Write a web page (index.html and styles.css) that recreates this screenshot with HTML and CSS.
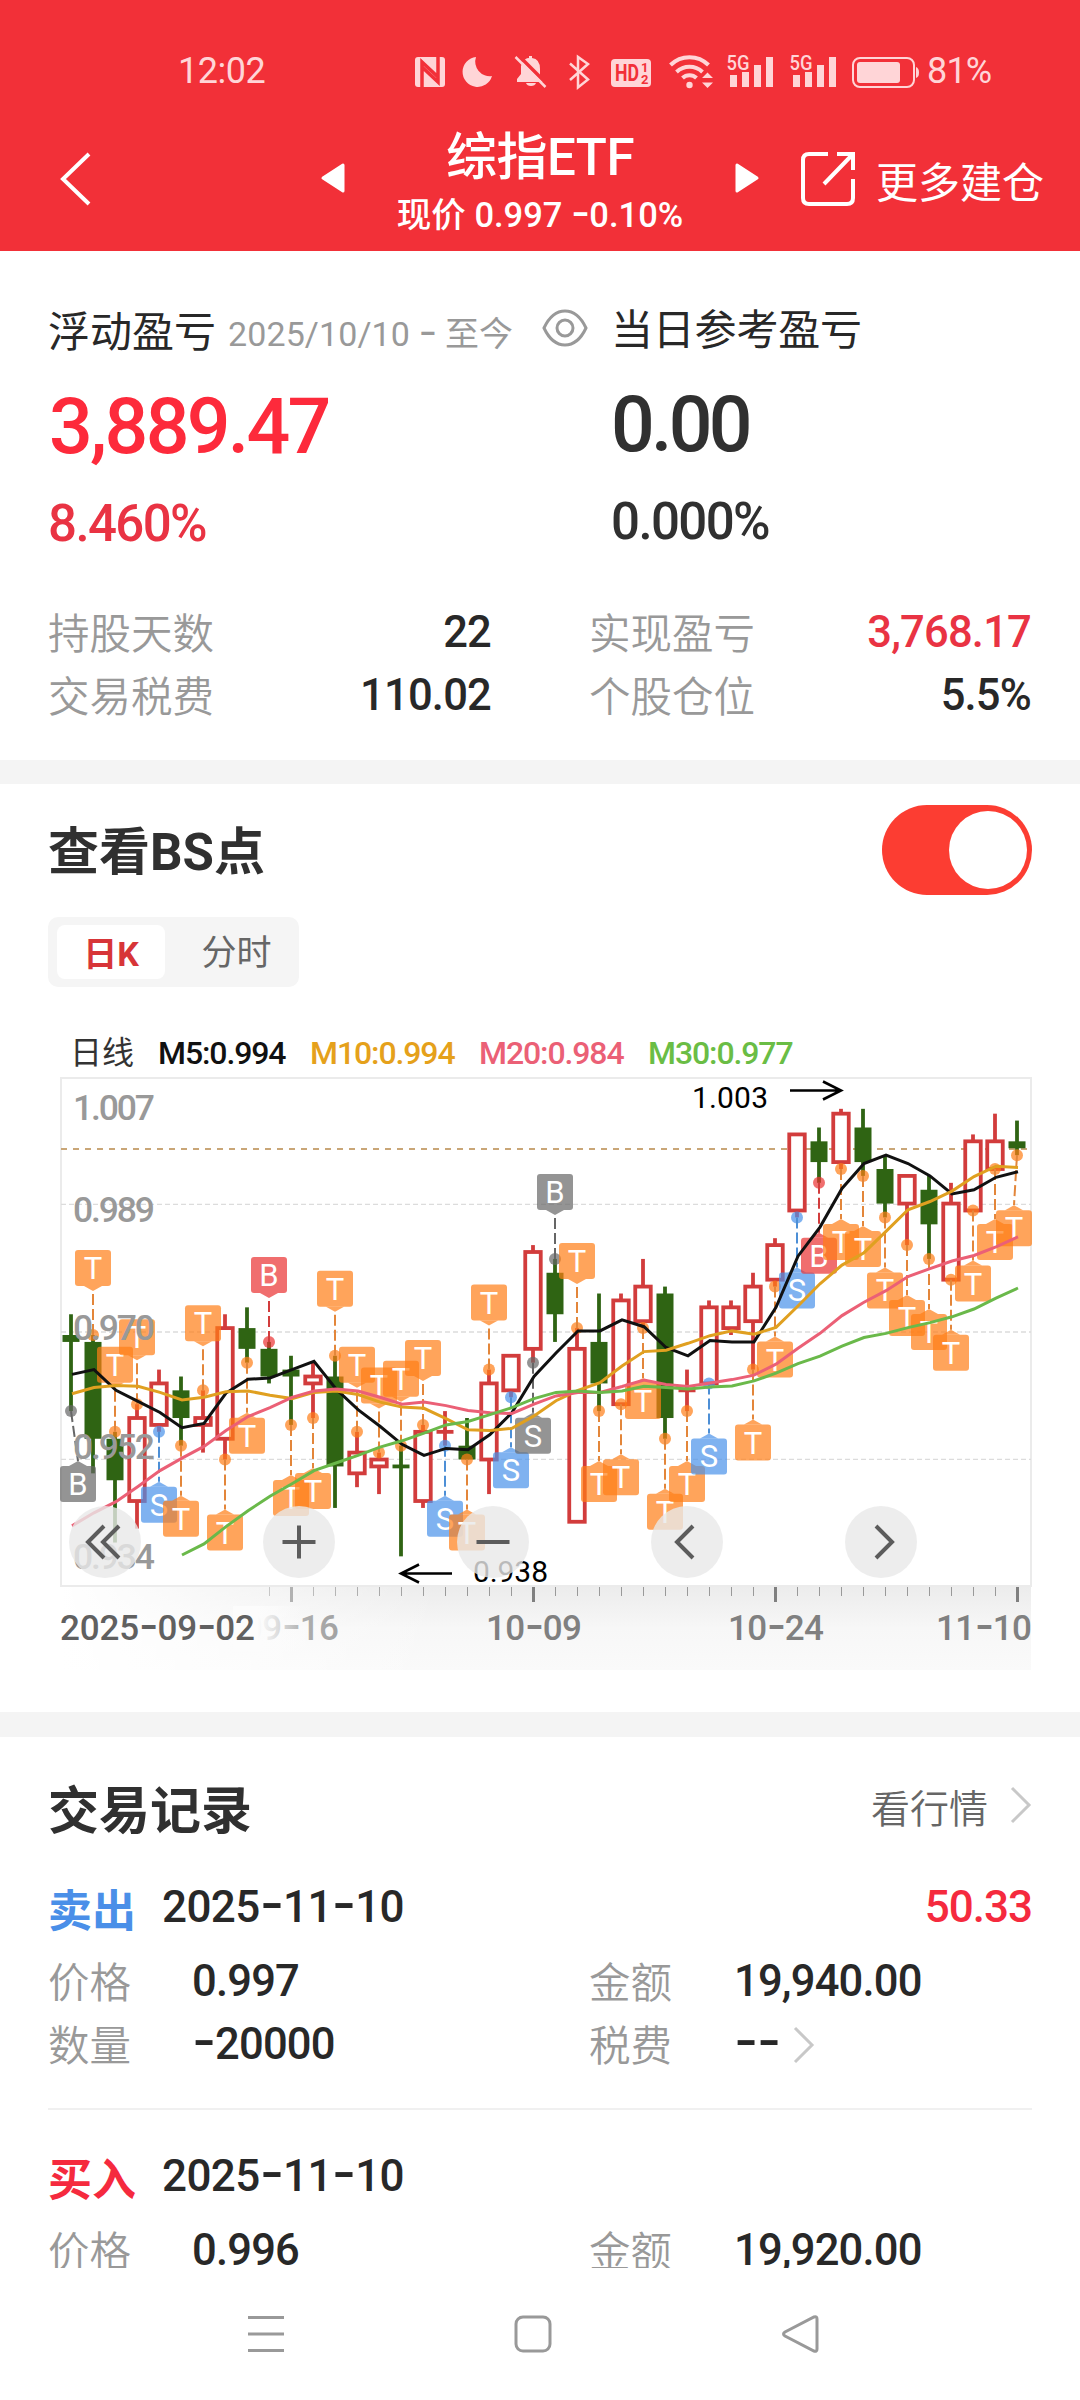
FILE: index.html
```html
<!DOCTYPE html>
<html lang="zh-CN">

<head>
    <meta charset="UTF-8">
    <title>综指ETF</title>
    <link rel="stylesheet" href="styles.css">
</head>

<body>

    <header class="header">
        <div class="status">
            <span class="time">12:02</span>
            <svg class="status-icons" viewBox="410 48 510 44" width="510" height="44">
                <!-- nfc -->
                <rect x="415" y="56" width="30" height="30" rx="3" />
                <path class="cut" d="M422 86V61l16 15M438 56v25l-16-15" />
                <!-- moon -->
                <path d="M476 56a15 15 0 1 0 16 19a14.500 14.500 0 0 1-16-19z" />
                <!-- bell off -->
                <path d="M522 62q3-5 7-5v-2h3v2q8 1 8 11v7l5 6h-28v-3l4-5v-8z" />
                <path d="M526 82h10q-1 3-5 3t-5-3z" />
                <path class="cut" d="M518 54l30 30" stroke-width="2" />
                <path class="line" d="M515.500 56l30 30" />
                <!-- bluetooth -->
                <path class="line" d="M570 62.500l18 16-10 8V56l10 7-18 16" />
                <!-- hd -->
                <rect x="611" y="58" width="40" height="28" rx="4" />
                <text class="hd" x="615" y="80" textLength="24" lengthAdjust="spacingAndGlyphs">HD</text>
                <text class="hd-num" x="641" y="71">1</text>
                <text class="hd-num" x="641" y="83">2</text>
                <!-- wifi -->
                <circle cx="689.500" cy="84" r="3.200" />
                <path class="wifi" d="M670.500 64a27 27 0 0 1 38 0M676.500 71a19 19 0 0 1 26 0M682.500 77a10 10 0 0 1 14 0" />
                <path d="M702 77l5.500-5.500 5.500 5.500zM702 81.500h11l-5.500 5.500z" />
                <!-- signal x2 -->
                <text class="net" x="726.500" y="68.500" textLength="23" lengthAdjust="spacingAndGlyphs">5G</text>
                <path d="M730 74h7v12h-7zM742 71h7v15h-7zM754 64h7v22h-7zM766 56h7v30h-7z" />
                <text class="net" x="789.500" y="68.500" textLength="23" lengthAdjust="spacingAndGlyphs">5G</text>
                <path d="M793 74h7v12h-7zM805 71h7v15h-7zM817 64h7v22h-7zM829 56h7v30h-7z" />
                <!-- battery -->
                <rect class="outline" x="853" y="57" width="61" height="29" rx="7" />
                <rect x="857" y="61" width="43" height="21" rx="3" />
                <path d="M916 66q3 1 3 5.500t-3 5.500z" />
            </svg>
            <span class="battery">81%</span>
        </div>

        <div class="nav">
            <svg class="back" width="32" height="56" viewBox="0 0 32 56"><path d="M30 3L4 28l26 25" /></svg>
            <svg class="prev" width="26" height="32" viewBox="0 0 26 32"><path d="M23 3v26L3 16z" /></svg>
            <div class="nav-title">
                <div class="name">综指ETF</div>
                <div class="price">现价 0.997 <span class="dash">-</span>0.10%</div>
            </div>
            <svg class="next" width="26" height="32" viewBox="0 0 26 32"><path d="M3 3v26l20-13z" /></svg>
            <svg class="open" width="56" height="56" viewBox="0 0 56 56"><path d="M28 3H9q-6 0-6 6v38q0 6 6 6h38q6 0 6-6V28M37 3h16v16M53 3L24 33" /></svg>
            <span class="more">更多建仓</span>
        </div>
    </header>

    <section class="summary">
        <div class="pnl">
            <div class="pnl-col red">
                <div class="pnl-head">
                    <span>浮动盈亏</span>
                    <span class="range">2025/10/10 <span class="dash">-</span> 至今</span>
                    <svg class="eye" width="46" height="40" viewBox="0 0 46 40">
                        <path d="M2 20Q10 3 23 3t21 17Q36 37 23 37T2 20z" />
                        <circle cx="23" cy="20" r="8" />
                    </svg>
                </div>
                <div class="pnl-value">3,889.47</div>
                <div class="pnl-rate">8.460%</div>
            </div>
            <div class="pnl-col right">
                <div class="pnl-head">当日参考盈亏</div>
                <div class="pnl-value">0.00</div>
                <div class="pnl-rate">0.000%</div>
            </div>
        </div>
        <div class="stats">
            <div class="stat"><span class="label">持股天数</span><span class="value">22</span></div>
            <div class="stat"><span class="label">实现盈亏</span><span class="value red">3,768.17</span></div>
            <div class="stat"><span class="label">交易税费</span><span class="value">110.02</span></div>
            <div class="stat"><span class="label">个股仓位</span><span class="value">5.5%</span></div>
        </div>
    </section>

    <section class="bs">
        <div class="bs-head">
            <h2>查看BS点</h2>
            <div class="switch"></div>
        </div>
        <div class="tabs">
            <span class="tab active">日K</span>
            <span class="tab">分时</span>
        </div>
        <div class="legend">
            <span class="day">日线</span>
            <span class="m5">M5:0.994</span>
            <span class="m10">M10:0.994</span>
            <span class="m20">M20:0.984</span>
            <span class="m30">M30:0.977</span>
        </div>
        <div class="chart">
            <svg id="kline" width="984" height="594" viewBox="0 0 984 594"></svg>
            <div class="tools">
                <svg width="72" height="72" viewBox="0 0 72 72"><path d="M35 20L19 36l16 16M50 20L34 36l16 16" /></svg>
                <svg width="72" height="72" viewBox="0 0 72 72"><path d="M19.500 36h33M36 19.500v33" /></svg>
                <svg width="72" height="72" viewBox="0 0 72 72"><path d="M19.500 36h33" /></svg>
                <svg width="72" height="72" viewBox="0 0 72 72"><path d="M42 20L26 36l16 16" /></svg>
                <svg width="72" height="72" viewBox="0 0 72 72"><path d="M31 20l16 16-16 16" /></svg>
            </div>
        </div>
    </section>

    <section class="records">
        <div class="records-head">
            <h2>交易记录</h2>
            <span class="quote">看行情</span>
            <svg class="chevron" width="24" height="40" viewBox="0 0 24 40"><path d="M3 3l17 17L3 37" /></svg>
        </div>

        <div class="record">
            <div class="record-head">
                <span class="side sell">卖出</span>
                <span class="date">2025<span class="dash">-</span>11<span class="dash">-</span>10</span>
                <span class="profit">50.33</span>
            </div>
            <div class="fields">
                <span class="label">价格</span><span class="value">0.997</span>
                <span class="label">金额</span><span class="value">19,940.00</span>
                <span class="label">数量</span><span class="value"><span class="dash">-</span>20000</span>
                <span class="label">税费</span>
                <span class="value fee"><span><span class="dash">--</span></span><svg class="chevron" width="24" height="40" viewBox="0 0 24 40"><path d="M3 3l17 17L3 37" /></svg></span>
            </div>
        </div>

        <div class="record">
            <div class="record-head">
                <span class="side buy">买入</span>
                <span class="date">2025<span class="dash">-</span>11<span class="dash">-</span>10</span>
            </div>
            <div class="fields">
                <span class="label">价格</span><span class="value">0.996</span>
                <span class="label">金额</span><span class="value">19,920.00</span>
            </div>
        </div>
    </section>

    <footer class="navbar">
        <svg width="40" height="40" viewBox="0 0 40 40"><path d="M2 3.500h36M2 20h36M2 36.500h36" /></svg>
        <svg width="40" height="40" viewBox="0 0 40 40"><rect x="3" y="3" width="34" height="34" rx="7" /></svg>
        <svg width="40" height="40" viewBox="0 0 40 40"><path d="M37 5v30q0 3-3 2L5 22q-3-2 0-4L34 3q3-1 3 2z" /></svg>
    </footer>

    <script src="chart.js"></script>

</body>

</html>
```

FILE: styles.css
```css
* {
    box-sizing: border-box;
}

body {
    margin: 0;
    width: 1080px;
    height: 2400px;
    overflow: hidden;
    display: flex;
    flex-direction: column;
    background: #fff;
    color: #282828;
    font-family: Roboto, "Noto Sans CJK SC", sans-serif;
}

svg {
    display: block;
    flex: none;
}

h2 {
    margin: 0;
    padding-top: 5px;
    font-size: 51px;
    line-height: 60px;
    font-weight: bold;
    color: #303030;
}

/* wide dash next to the digits */
.dash {
    font-family: Inter, sans-serif;
    font-size: 1.2em;
    line-height: 0;
    letter-spacing: -0.02em;
}

.red {
    color: #e93343;
}

/* header */
.header {
    height: 251px;
    flex: none;
    background: #f23038;
    color: #fff;
}

.status {
    height: 98px;
    padding: 44px 0 0 178px;
    display: flex;
    align-items: center;
    color: #ffd5d7;
    font-size: 36px;
}

.time {
    width: 232px;
    letter-spacing: -0.5px;
}

.battery {
    margin-left: 7px;
    letter-spacing: -0.8px;
}

.status-icons {
    fill: #ffd5d7;
    overflow: visible;
}

.status-icons .cut {
    fill: none;
    stroke: #f23038;
    stroke-width: 3.5;
}

.status-icons .line,
.status-icons .outline {
    fill: none;
    stroke: #ffd5d7;
    stroke-width: 2.5;
}

.status-icons .outline {
    stroke-width: 2;
}

.status-icons .wifi {
    fill: none;
    stroke: #ffd5d7;
    stroke-width: 4;
}

.status-icons .hd {
    fill: #f23038;
    font-size: 23px;
    font-weight: bold;
}

.status-icons .hd-num {
    fill: #f23038;
    font-size: 13px;
    font-weight: bold;
}

.status-icons .net {
    font-size: 20px;
    font-weight: 500;
}

.nav {
    height: 153px;
    display: flex;
    align-items: center;
    padding: 9px 0 0 59px;
}

.nav svg {
    fill: #fff;
}

.nav .back,
.nav .open {
    fill: none;
    stroke: #fff;
    stroke-width: 4;
}

.nav .prev {
    margin-left: 229px;
}

.nav .prev,
.nav .next {
    stroke: #fff;
    stroke-width: 3;
    stroke-linejoin: round;
    margin-top: -3px;
}

.nav-title {
    width: 388px;
    text-align: center;
    margin-top: 11px;
}

.name {
    font-size: 51px;
    line-height: 61px;
    font-weight: 500;
    letter-spacing: -0.5px;
}

.price {
    font-size: 34.500px;
    line-height: 54px;
    font-weight: 500;
}

.nav .open {
    margin-left: 40px;
}

.more {
    margin: 0 0 0 20px;
    font-size: 42px;
}

/* profit summary */
.summary {
    height: 509px;
    flex: none;
    padding: 47px 48px 0;
}

.pnl {
    display: grid;
    grid-template-columns: 563px 1fr;
}

.pnl-head {
    height: 60px;
    display: flex;
    align-items: center;
    font-size: 42px;
    color: #282828;
    white-space: nowrap;
}

.pnl-col.right {
    margin-top: -2px;
    color: #303030;
}

.pnl-col.right .pnl-head {
    letter-spacing: -0.2px;
}

.range {
    margin-left: 12px;
    padding-top: 7px;
    font-size: 34px;
    color: #999;
    letter-spacing: 0.1px;
}

.eye {
    margin: 0 0 0 auto;
    margin-right: 23px;
    fill: none;
    stroke: #999;
    stroke-width: 3;
}

.pnl-value {
    margin-top: 20px;
    font-size: 77px;
    line-height: 98px;
    font-weight: 500;
    letter-spacing: -2.700px;
}

.pnl-col.red .pnl-value {
    padding-left: 1px;
    color: #fd2a3b;
}

.pnl-col.right .pnl-value {
    letter-spacing: -3.700px;
}

.pnl-rate {
    margin-top: 20px;
    font-size: 51px;
    line-height: 56px;
    font-weight: 500;
    letter-spacing: -1.600px;
}

.stats {
    margin-top: 49px;
    display: grid;
    grid-template-columns: 443px 442px;
    column-gap: 98px;
    grid-auto-rows: 63px;
}

.stat {
    display: flex;
    justify-content: space-between;
    align-items: center;
}

.label {
    font-size: 41.500px;
    line-height: 56px;
    font-weight: 350;
    color: #999;
    padding-top: 5px;
}

.value {
    font-size: 43.500px;
    line-height: 56px;
    font-weight: 500;
    letter-spacing: -0.8px;
}

/* chart block */
.bs {
    height: 952px;
    flex: none;
    border-top: 24px solid #f4f4f4;
    padding: 0 48px;
}

.bs-head {
    height: 133px;
    display: flex;
    justify-content: space-between;
    align-items: center;
}

.switch {
    width: 150px;
    height: 90px;
    margin-top: -1px;
    padding: 6px 5px;
    border-radius: 45px;
    background: #fc3d32;
}

.switch::after {
    content: "";
    display: block;
    width: 78px;
    height: 78px;
    margin-left: auto;
    border-radius: 50%;
    background: #fff;
}

.tabs {
    width: 251px;
    height: 70px;
    padding: 8px 0 8px 9px;
    display: flex;
    border-radius: 10px;
    background: #f5f5f5;
}

.tab {
    flex: none;
    width: 108px;
    height: 54px;
    line-height: 58px;
    border-radius: 8px;
    text-align: center;
    font-size: 35px;
    color: #666;
}

.tab + .tab {
    width: 143px;
}

.tab.active {
    background: #fff;
    color: #d73538;
    font-size: 34px;
    font-weight: bold;
}

.legend {
    height: 89px;
    padding: 43px 0 0 22px;
    display: flex;
    line-height: 47px;
    font-size: 32px;
    font-weight: 500;
    letter-spacing: -1.100px;
}

.legend span {
    width: 169px;
}

.legend .day {
    width: 88px;
    color: #333;
    font-weight: normal;
    letter-spacing: 0;
}

.legend .m5 {
    width: 152px;
    color: #111;
}

.legend .m10 {
    color: #e5a11b;
}

.legend .m20 {
    color: #eb6076;
}

.legend .m30 {
    color: #6abd45;
}

.chart {
    position: relative;
}

.tools {
    position: absolute;
    left: 21px;
    top: 430px;
    display: flex;
    gap: 122px;
}

.tools svg {
    border-radius: 50%;
    background: rgba(232, 232, 232, 0.8);
    fill: none;
    stroke: #5c5c5c;
    stroke-width: 4;
}

/* kline svg */
.frame {
    fill: none;
    stroke: #ebebeb;
    stroke-width: 2;
}

.grid {
    stroke: #dcdcdc;
    stroke-width: 1.300;
    stroke-dasharray: 5 3;
}

.last {
    stroke: #c9a677;
    stroke-width: 2;
    stroke-dasharray: 6 6;
}

.up {
    fill: none;
    stroke: #d23c3c;
    stroke-width: 3.800;
}

.down {
    fill: #2f6413;
    stroke: #2f6413;
    stroke-width: 3.800;
}

.up rect {
    fill: #fff;
}

.down rect {
    stroke: none;
}

.mark path,
.mark rect,
.mark circle {
    fill-opacity: 0.7;
}

.mark line {
    stroke-width: 2;
    stroke-dasharray: 11 4;
}

.mark text {
    fill: #fff;
    font-size: 31px;
    text-anchor: middle;
}

.t {
    fill: #ff7d16;
    stroke: #e3863a;
}

.s {
    fill: #4891ea;
    stroke: #4d8fd6;
}

.b {
    fill: #ea3030;
    stroke: #d23c3c;
}

.x {
    fill: #666;
    stroke: #666;
}

.mark path,
.mark rect,
.mark circle,
.mark text {
    stroke: none;
}

.ma {
    fill: none;
    stroke-width: 3;
}

.ma5 {
    stroke: #111;
}

.ma10 {
    stroke: #e0a020;
}

.ma20 {
    stroke: #eb6076;
}

.ma30 {
    stroke: #6ab94a;
}

.scale {
    fill: #999;
    font-size: 35.500px;
    font-weight: 500;
}

.extreme {
    fill: #000;
    font-size: 30px;
}

.arrow {
    fill: none;
    stroke: #000;
    stroke-width: 2.600;
}

.tick {
    stroke: #999;
    stroke-width: 1;
}

.tick.major {
    stroke: #808080;
    stroke-width: 3;
}

.day-label {
    fill: #808080;
    font-size: 35px;
    font-weight: 500;
}

.day-label.first {
    fill: #606060;
}

/* records */
.records {
    height: 556px;
    flex: none;
    overflow: hidden;
    border-top: 25px solid #f4f4f4;
    padding: 0 48px;
}

.records-head {
    height: 144px;
    display: flex;
    align-items: center;
}

.quote {
    margin: -7px 0 0 auto;
    font-size: 39px;
    font-weight: 350;
    color: #666;
}

.chevron {
    margin-left: 21px;
    fill: none;
    stroke: #c8c8c8;
    stroke-width: 3;
}

.records-head .chevron {
    margin-top: -8px;
    margin-right: -1px;
}

.record {
    height: 229px;
    border-bottom: 2px solid #f0f0f0;
}

.record + .record {
    padding-top: 40px;
}

.record-head {
    height: 52px;
    display: flex;
    align-items: center;
    font-size: 44px;
    font-weight: 500;
}

.side {
    width: 114px;
    font-weight: bold;
    padding-top: 2px;
}

.sell {
    color: #4a8fe8;
}

.buy {
    color: #f52a3e;
}

.date {
    letter-spacing: -0.6px;
}

.profit {
    margin-left: auto;
    color: #f52a3e;
    letter-spacing: -1px;
}

.fields {
    margin-top: 17px;
    display: grid;
    grid-template-columns: 144px 397px 145px 1fr;
    grid-auto-rows: 63px;
    align-items: center;
}

.fields .label {
    padding-top: 4px;
}

.fee {
    display: flex;
    align-items: center;
}

.fields .chevron {
    margin-left: 12px;
}

/* system nav bar */
.navbar {
    flex: 1;
    padding-top: 46px;
    display: flex;
    gap: 227px;
    padding-left: 246px;
    background: #fff;
}

.navbar svg {
    fill: none;
    stroke: #999;
    stroke-width: 3;
}
```

FILE: chart.js
```js
// open, close, high, low in 1/1000, then marker: type + a(bove) / b(elow)
// T = both, S = sell, B = buy, lowercase = outside of this position
const days = [
    [970, 969, 973, 959, 'bb'], [969, 955, 970, 950, 'Ta'], [955, 949, 956, 940, 'Ta'], [946, 958, 960, 942, 'Ta'],
    [957, 963, 965, 956, 'Sb'], [962, 958, 964, 954, 'Tb'], [957, 958, 962, 953, 'Ta'], [955, 971, 973, 952, 'Tb'],
    [971, 968, 974, 966, 'Tb'], [968, 964, 969, 963, 'Ba'], [965, 964, 967, 957, 'Tb'], [963, 964, 966, 958, 'Tb'],
    [964, 951, 967, 945, 'Ta'], [950, 953, 956, 948, 'Ta'], [951, 952, 953, 947, 'Ta'], [951, 951, 954, 938, 'Ta', 'down'],
    [946, 956, 957, 945, 'Ta'], [956, 956, 959, 954, 'Sb'], [954, 952, 958, 952, 'Tb'], [952, 963, 965, 947, 'Ta'],
    [962, 967, 967, 961, 'Sb'], [968, 982, 983, 966, 'sb'], [979, 973, 981, 969, 'ba'], [943, 968, 971, 943, 'Ta'],
    [969, 963, 976, 959, 'Tb'], [960, 975, 976, 960, 'Tb'], [972, 977, 981, 971, 'Tb'], [976, 958, 977, 955, 'Tb'],
    [962, 962, 965, 959, 'Tb'], [963, 974, 975, 963, 'Sb'], [971, 974, 975, 970, ''], [972, 977, 979, 965, 'Tb'],
    [978, 983, 984, 977, 'Tb'], [988, 999, 999, 987, 'Sb'], [998, 995, 1000, 992, 'Bb'], [995, 1002, 1002.7, 994, 'Tb'],
    [1000, 995, 1002.7, 993, 'Tb'], [994, 989, 996, 987, 'Tb'], [989, 993, 993, 983, 'Tb'], [991, 986, 993, 981, 'Tb'],
    [978, 989, 992, 978, 'Tb'], [988, 998, 999, 988, 'Tb'], [994, 998, 1002, 994, 'Tb'], [998, 997, 1001, 996, 'Tb']
];

// averages for the days whose window starts before the first candle
const heads = {
    5: [964.3, 965, 962, 960.4],
    10: [961.5, 962.4, 962.7, 962.6, 961.7, 960.6, 961, 961.8, 961.9],
    20: [942.4, 944.3, 945.9, 948.1, 950.4, 952.2, 953.9, 956.2, 958.2, 959.5, 961, 961.9, 962.2, 961.9, 961, 960, 960.3, 959.8, 959.1],
    30: [null, null, null, null, null, 938.2, 939.8, 942.3, 944.6, 946.7, 948.5, 950.4, 951.5, 952.6, 953.8, 954.7, 955.8, 957, 957.5, 958.5, 959.5, 960.8, 961.7, 961.9, 961.7, 961.9, 962.6, 962.4, 962.2]
};

const x = i => 23 + 22 * i;
const y = p => 51.5 + (1000 - p) * 6.917;

function candle([open, close, high, low, , dir], i) {
    const up = dir !== 'down' && close >= open;
    const top = y(Math.max(open, close));
    const bottom = y(Math.min(open, close));
    const w = up ? 15.5 : 17;
    let s = `<g class="${up ? 'up' : 'down'}"><line x1="${x(i)}" x2="${x(i)}" y1="${y(high)}" y2="${y(low)}"/>`;
    if (open === close) {
        s += `<line x1="${x(i) - 8.5}" x2="${x(i) + 8.5}" y1="${top}" y2="${top}"/>`;
    } else {
        s += `<rect x="${x(i) - w / 2}" y="${top}" width="${w}" height="${bottom - top}"/>`;
    }
    return s + '</g>';
}

function marker([, , high, low, mark], i) {
    if (!mark) return '';
    const type = mark[0];
    const above = mark[1] === 'a';
    const cls = type === type.toLowerCase() ? 'x' : type.toLowerCase();
    const cy = above ? y(high) : y(low);
    const cx = Math.min(Math.max(x(i), 30), 966); // keep the box inside the frame
    const top = above ? cy - 85 : cy + 55;
    const tip = above ? top + 41 : top - 5;
    const edge = above ? top + 36 : top;
    return `<g class="mark ${cls}">
        <circle cx="${x(i)}" cy="${cy}" r="6"/>
        <line x1="${x(i)}" y1="${cy}" x2="${cx}" y2="${tip}"/>
        <rect x="${cx - 18}" y="${top}" width="36" height="36" rx="3"/>
        <path d="M${cx - 9} ${edge}H${cx + 9}L${cx} ${tip}z"/>
        <text x="${cx}" y="${top + 29}">${type.toUpperCase()}</text>
    </g>`;
}

function average(n) {
    const pts = [];
    days.forEach((d, i) => {
        let v = heads[n][i];
        if (i >= n - 1) v = days.slice(i - n + 1, i + 1).reduce((a, b) => a + b[1], 0) / n;
        if (v) pts.push((x(i) + 1) + ',' + y(v).toFixed(1));
    });
    return `<polyline class="ma ma${n}" points="${pts.join(' ')}"/>`;
}

function dayLabel(text, left, width, cls = '') {
    const html = text.replace(/-/g, '<tspan class="dash">-</tspan>');
    return `<text class="day-label ${cls}" x="${left}" y="564" textLength="${width}">${html}</text>`;
}

function hline(cls, at) {
    return `<line class="${cls}" x1="13" x2="983" y1="${at}" y2="${at}"/>`;
}

let out = `<defs>
    <linearGradient id="shade" x2="0" y2="1"><stop offset="0" stop-color="#ececec"/><stop offset="0.5" stop-color="#f7f7f7"/><stop offset="1" stop-color="#fafafa"/></linearGradient>
    <linearGradient id="fade"><stop offset="0" stop-color="#fff"/><stop offset="1" stop-color="#fff" stop-opacity="0"/></linearGradient>
    <linearGradient id="cover"><stop offset="0.35" stop-color="#fcfcfc"/><stop offset="1" stop-color="#fcfcfc" stop-opacity="0"/></linearGradient>
</defs>`;

// date axis
out += '<rect x="13" y="511" width="970" height="83" fill="url(#shade)"/>';
for (let i = 9; i < days.length; i++) {
    const major = (i - 10) % 11 === 0;
    out += `<line class="tick ${major ? 'major' : ''}" x1="${x(i) + 0.5}" x2="${x(i) + 0.5}" y1="511" y2="${major ? 526 : 520}"/>`;
}
out += dayLabel('09-16', 195, 96);
out += '<rect x="13" y="511" width="380" height="83" fill="url(#fade)"/>';
out += '<rect x="185" y="530" width="70" height="45" fill="url(#cover)"/>';
out += dayLabel('2025-09-02', 12, 195, 'first');
out += dayLabel('10-09', 438, 96) + dayLabel('10-24', 680, 96) + dayLabel('11-10', 888, 96);

// price area
out += '<rect class="frame" x="13" y="2" width="970" height="508"/>';
out += hline('grid', 128.3) + hline('grid', 256) + hline('grid', 383.3) + hline('last', 73);
out += days.map(candle).join('');
out += days.map(marker).join('');
[['1.007', 44], ['0.989', 146], ['0.970', 264], ['0.952', 383], ['0.934', 493]].forEach(([t, at]) => {
    out += `<text class="scale" x="25" y="${at}" textLength="82">${t}</text>`;
});
out += average(5) + average(10) + average(20) + average(30);

// highest and lowest price
out += '<text class="extreme" x="644" y="32" textLength="76">1.003</text><path class="arrow" d="M742 14.500h51M775 5.500l18 9-18 9"/>';
out += '<text class="extreme" x="425" y="506" textLength="75">0.938</text><path class="arrow" d="M404 497.500h-51M371 488.500l-18 9 18 9"/>';

document.getElementById('kline').innerHTML = out;
```
